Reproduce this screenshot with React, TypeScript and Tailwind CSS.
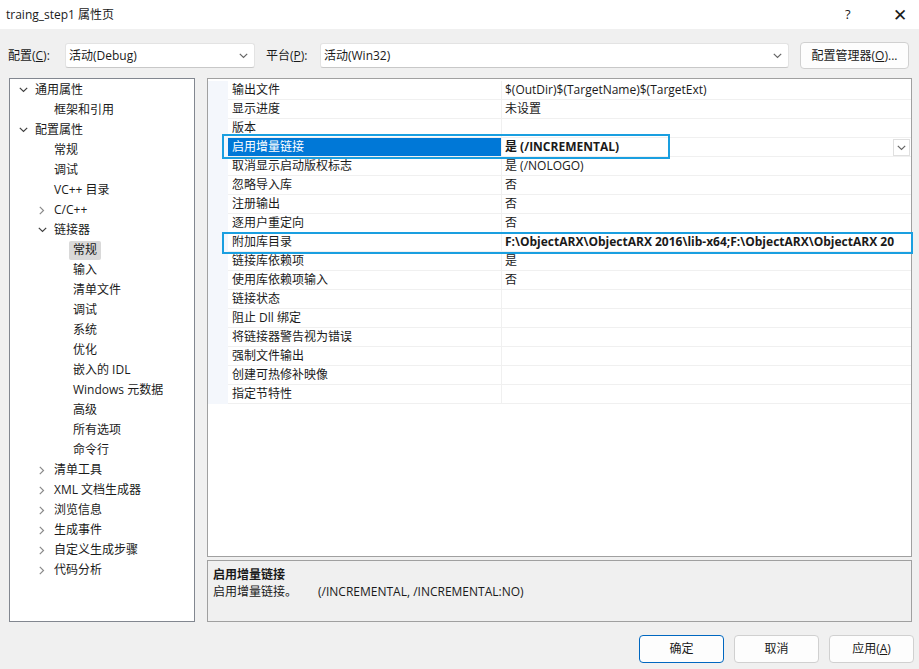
import React from "react";

const FONT = '"Open Sans", "Noto Sans", "Noto Sans CJK SC", sans-serif';

function ChevDown({ color = "#404040" }: { color?: string }) {
  return (
    <svg width="9" height="6" viewBox="0 0 9 6">
      <path d="M0.8 0.8 L4.5 4.5 L8.2 0.8" fill="none" stroke={color} strokeWidth="1.2" />
    </svg>
  );
}
function ChevRight({ color = "#8a8a8a" }: { color?: string }) {
  return (
    <svg width="6" height="9" viewBox="0 0 6 9">
      <path d="M0.8 0.8 L4.5 4.5 L0.8 8.2" fill="none" stroke={color} strokeWidth="1.2" />
    </svg>
  );
}

type TreeItem = { l: number; t: string; s?: "open" | "closed"; sel?: boolean };
const tree: TreeItem[] = [
  { l: 0, t: "通用属性", s: "open" },
  { l: 1, t: "框架和引用" },
  { l: 0, t: "配置属性", s: "open" },
  { l: 1, t: "常规" },
  { l: 1, t: "调试" },
  { l: 1, t: "VC++ 目录" },
  { l: 1, t: "C/C++", s: "closed" },
  { l: 1, t: "链接器", s: "open" },
  { l: 2, t: "常规", sel: true },
  { l: 2, t: "输入" },
  { l: 2, t: "清单文件" },
  { l: 2, t: "调试" },
  { l: 2, t: "系统" },
  { l: 2, t: "优化" },
  { l: 2, t: "嵌入的 IDL" },
  { l: 2, t: "Windows 元数据" },
  { l: 2, t: "高级" },
  { l: 2, t: "所有选项" },
  { l: 2, t: "命令行" },
  { l: 1, t: "清单工具", s: "closed" },
  { l: 1, t: "XML 文档生成器", s: "closed" },
  { l: 1, t: "浏览信息", s: "closed" },
  { l: 1, t: "生成事件", s: "closed" },
  { l: 1, t: "自定义生成步骤", s: "closed" },
  { l: 1, t: "代码分析", s: "closed" },
];

type Row = { n: string; v: string; sel?: boolean; bold?: boolean };
const rows: Row[] = [
  { n: "输出文件", v: "$(OutDir)$(TargetName)$(TargetExt)" },
  { n: "显示进度", v: "未设置" },
  { n: "版本", v: "" },
  { n: "启用增量链接", v: "是 (/INCREMENTAL)", sel: true, bold: true },
  { n: "取消显示启动版权标志", v: "是 (/NOLOGO)" },
  { n: "忽略导入库", v: "否" },
  { n: "注册输出", v: "否" },
  { n: "逐用户重定向", v: "否" },
  { n: "附加库目录", v: "F:\\ObjectARX\\ObjectARX 2016\\lib-x64;F:\\ObjectARX\\ObjectARX 20", bold: true },
  { n: "链接库依赖项", v: "是" },
  { n: "使用库依赖项输入", v: "否" },
  { n: "链接状态", v: "" },
  { n: "阻止 Dll 绑定", v: "" },
  { n: "将链接器警告视为错误", v: "" },
  { n: "强制文件输出", v: "" },
  { n: "创建可热修补映像", v: "" },
  { n: "指定节特性", v: "" },
];

function Combo({ w, text }: { w: string; text: string }) {
  return (
    <div className={`${w} shrink-0 h-[25px] bg-white border border-[#e3e3e3] border-b-[#c8c8c8] rounded-[3px] flex items-center pl-[3px] pr-[6px]`}>
      <span className="flex-1 text-[12px] text-[#1a1a1a]">{text}</span>
      <ChevDown color="#666" />
    </div>
  );
}

function Btn({ children, primary }: { children: React.ReactNode; primary?: boolean }) {
  return (
    <div
      className={`w-[85px] h-[28px] rounded-[4px] flex items-center justify-center text-[12px] text-[#1a1a1a] bg-[#fdfdfd] border ${
        primary ? "border-[#0067c0]" : "border-[#d0d0d0]"
      }`}
    >
      {children}
    </div>
  );
}

export default function App() {
  return (
    <div className="w-[919px] h-[669px] bg-[#f0f0f0] flex flex-col overflow-hidden" style={{ fontFamily: FONT }}>
      {/* Title bar */}
      <div className="h-[29px] shrink-0 bg-white flex items-center pl-[6px] text-[12px] text-[#1a1a1a]">
        <span className="flex-1">traing_step1 属性页</span>
        <span className="w-[12px] text-[13px] mr-[36px]">?</span>
        <span className="text-[17px] font-light mr-[12px] leading-none">✕</span>
      </div>

      {/* Config row */}
      <div className="flex items-center pl-[8px] pt-[13px] h-[40px] shrink-0 text-[12px] text-[#1a1a1a] whitespace-nowrap">
        <span className="w-[57px] shrink-0">
          配置(<span className="underline">C</span>):
        </span>
        <Combo w="w-[190px]" text="活动(Debug)" />
        <span className="ml-[11px] w-[54px] shrink-0">
          平台(<span className="underline">P</span>):
        </span>
        <Combo w="w-[469px]" text="活动(Win32)" />
        <div className="ml-[11px] w-[109px] shrink-0 h-[27px] rounded-[4px] border border-[#d0d0d0] bg-[#fdfdfd] flex items-center justify-center">
          配置管理器(<span className="underline">O</span>)...
        </div>
      </div>

      {/* Main */}
      <div className="flex px-[9px] pt-[9px] gap-[12px] h-[553px] shrink-0">
        {/* Tree */}
        <div className="w-[186px] shrink-0 h-[544px] bg-white border border-[#828790] pt-[1px] text-[12px] text-[#1a1a1a] whitespace-nowrap overflow-hidden">
          {tree.map((it, i) => {
            const pad = it.l === 0 ? 8 : it.l === 1 ? 27 : 0;
            return (
              <div key={i} className="h-[20px] flex items-center relative">
                {it.s && (
                  <span className="absolute flex items-center justify-center w-[10px]" style={{ left: pad }}>
                    {it.s === "open" ? <ChevDown /> : <ChevRight />}
                  </span>
                )}
                <span
                  className={`${it.l === 0 ? "ml-[25px]" : it.l === 1 ? "ml-[44px]" : "ml-[59px]"} ${
                    it.sel ? "bg-[#d9d9d9] px-[4px] h-[19px] flex items-center rounded-[2px]" : it.l === 2 ? "px-[4px]" : ""
                  }`}
                >
                  {it.t}
                </span>
              </div>
            );
          })}
        </div>

        {/* Right */}
        <div className="w-[705px] shrink-0 flex flex-col gap-[3px]">
          <div className="h-[479px] bg-white border border-[#a0a0a0] pt-[2px] relative text-[12px] text-[#1a1a1a] whitespace-nowrap">
            {rows.map((r, i) => (
              <div key={i} className="h-[19px] flex">
                <div className="w-[20px] shrink-0 bg-[#f4f7fc]" />
                <div
                  className={`w-[274px] shrink-0 flex items-center pl-[4px] border-b border-r border-[#f0f0f0] ${
                    r.sel ? "bg-[#0078d7] text-white" : ""
                  }`}
                >
                  {r.n}
                </div>
                <div className="flex-1 min-w-0 flex items-center pl-[3px] border-b border-[#f0f0f0] overflow-hidden relative">
                  <span className={r.bold ? "font-bold" : ""}>{r.v}</span>
                  {r.sel && (
                    <div className="absolute right-[1px] top-[1px] w-[17px] h-[17px] bg-white border border-[#e0e0e0] flex items-center justify-center">
                      <ChevDown color="#666" />
                    </div>
                  )}
                </div>
              </div>
            ))}
            {/* annotation rectangles */}
            <div className="absolute left-[14px] top-[55px] w-[448px] h-[25px] border-2 border-[#1a9fe0]" />
            <div className="absolute left-[14px] top-[153px] w-[691px] h-[22px] border-2 border-[#1a9fe0]" />
          </div>
          <div className="h-[62px] border border-[#a0a0a0] bg-[#f0f0f0] pl-[5px] pt-[5px] text-[12px] text-[#1a1a1a] leading-[17px] whitespace-nowrap">
            <div className="font-bold">启用增量链接</div>
            <div>
              启用增量链接。<span className="ml-[21px]">(/INCREMENTAL, /INCREMENTAL:NO)</span>
            </div>
          </div>
        </div>
      </div>

      {/* Buttons */}
      <div className="flex justify-end gap-[10px] pr-[5px] pt-[13px]">
        <Btn primary>确定</Btn>
        <Btn>取消</Btn>
        <Btn>
          应用(<span className="underline">A</span>)
        </Btn>
      </div>
    </div>
  );
}
